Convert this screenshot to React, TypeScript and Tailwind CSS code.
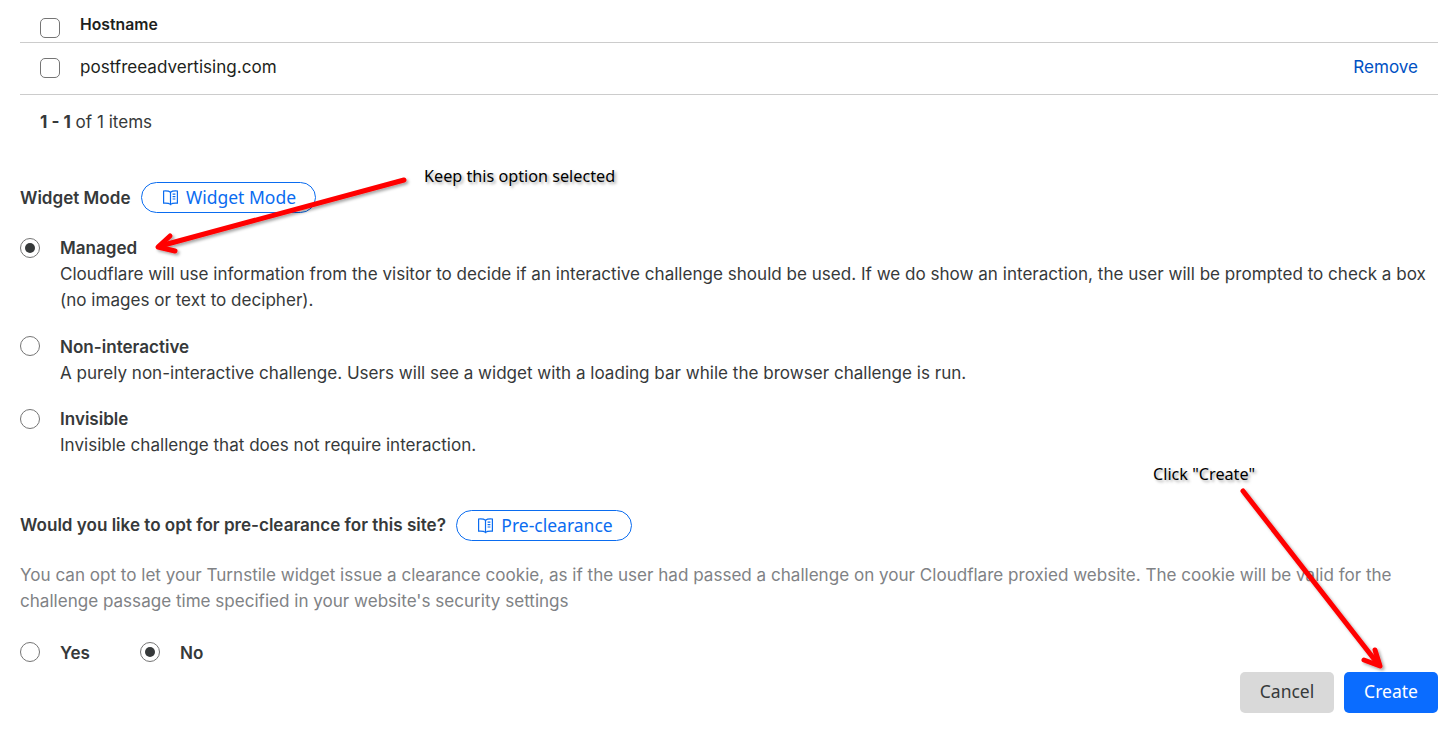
import React from "react";

const inter = "font-['Inter','Liberation_Sans',sans-serif]";
const noto = "font-['Noto_Sans','Liberation_Sans',sans-serif]";

function BookIcon() {
  return (
    <svg width="17" height="17" viewBox="0 0 17 17" fill="none" stroke="#0a6cf0" strokeWidth="1.2" className="shrink-0">
      <path d="M8.5 3.2 C7 2 4 1.8 1.6 2 V14.2 C4 14 7 14.2 8.5 15.4 V3.2 Z" />
      <path d="M8.5 3.2 C10 2 13 1.8 15.4 2 V14.2 C13 14 10 14.2 8.5 15.4" />
      <path d="M10.6 5.2 H13.4 M10.6 7.6 H13.4 M10.6 10 H13.4" />
    </svg>
  );
}

function Pill({ label, className }: { label: string; className: string }) {
  return (
    <span className={`flex items-center justify-center gap-[7px] h-[31px] rounded-full border border-[#0a6cf0] text-[#0a6cf0] text-[17.5px] ${noto} ${className}`}>
      <BookIcon />
      {label}
    </span>
  );
}

function Radio({ checked }: { checked?: boolean }) {
  return (
    <span className="w-5 h-5 rounded-full border border-[#757575] bg-white flex items-center justify-center shrink-0">
      {checked && <span className="w-[10px] h-[10px] rounded-full bg-[#36393a]" />}
    </span>
  );
}

function Checkbox({ className = "" }: { className?: string }) {
  return <span className={`w-5 h-5 rounded-[5px] border border-[#757575] bg-white shrink-0 ${className}`} />;
}

function Option({ title, checked, children, className = "", radioClass = "" }: { title: string; checked?: boolean; children: React.ReactNode; className?: string; radioClass?: string }) {
  return (
    <div className={`flex gap-5 ${className}`}>
      <span className={`h-[26px] flex items-center ${radioClass}`}>
        <Radio checked={checked} />
      </span>
      <div className="text-[17.07px] leading-[26px] text-[#36393a]">
        <div className="font-semibold">{title}</div>
        <div>{children}</div>
      </div>
    </div>
  );
}

export default function App() {
  return (
    <div className={`relative w-[1453px] h-[738px] overflow-hidden bg-white ${inter} text-[#1d1f20]`}>
      <div className="pl-5 pr-[15px]">
        <div className="h-[43px] border-b border-[#cccccc] pl-5 flex items-start pt-[18px] gap-5">
          <Checkbox />
          <span className="text-[15.75px] font-semibold leading-[14px]">Hostname</span>
        </div>
        <div className="h-[52px] border-b border-[#cccccc] pl-5 pr-5 flex items-center gap-5 pb-[2px]">
          <Checkbox />
          <span className="text-[17.07px] flex-1 mb-[2px]">postfreeadvertising.com</span>
          <span className="text-[17.07px] text-[#0051c3] mb-[2px]">Remove</span>
        </div>
        <div className="pl-5 pt-[14px] text-[17.07px] leading-[26px] text-[#36393a]">
          <span className="font-bold">1 - 1</span> of 1 items
        </div>

        <div className="flex items-center gap-[11px] mt-[47px]">
          <span className="text-[17.07px] font-semibold text-[#36393a] mt-[1px]">Widget Mode</span>
          <Pill label="Widget Mode" className="w-[175px]" />
        </div>

        <Option title="Managed" checked className="mt-[22px]">
          Cloudflare will use information from the visitor to decide if an interactive challenge should be used. If we do show an interaction, the user will be prompted to check a box (no images or text to decipher).
        </Option>
        <Option title="Non-interactive" className="mt-[21px]" radioClass="-mt-[1px]">
          A purely non-interactive challenge. Users will see a widget with a loading bar while the browser challenge is run.
        </Option>
        <Option title="Invisible" className="mt-[20px]">
          Invisible challenge that does not require interaction.
        </Option>

        <div className="flex items-center gap-[10px] mt-[52px]">
          <span className="text-[17.07px] font-semibold text-[#36393a] mb-[2px]">Would you like to opt for pre-clearance for this site?</span>
          <Pill label="Pre-clearance" className="w-[176px] pl-[2px]" />
        </div>

        <p className="mt-[21px] text-[17.07px] leading-[26px] text-[#808285]">
          You can opt to let your Turnstile widget issue a clearance cookie, as if the user had passed a challenge on your Cloudflare proxied website. The cookie will be valid for the challenge passage time specified in your website's security settings
        </p>

        <div className="flex items-center h-5 mt-[28px] text-[17.07px] font-semibold text-[#36393a]">
          <Radio />
          <span className="ml-5 w-[80px] leading-5 mt-[2px] shrink-0">Yes</span>
          <Radio checked />
          <span className="ml-5 leading-5 mt-[2px]">No</span>
        </div>

        <div className={`flex justify-end gap-[10px] mt-[10px] text-[17.5px] ${noto}`}>
          <span className="w-[94px] h-[41px] rounded-[5px] bg-[#d9d9d9] text-[#36393a] flex items-center justify-center pb-[2px]">Cancel</span>
          <span className="w-[94px] h-[41px] rounded-[5px] bg-[#0a6cff] text-white flex items-center justify-center pb-[2px]">Create</span>
        </div>
      </div>

      <span className={`absolute left-[424px] top-[166px] text-[16.2px] leading-[20px] text-black ${noto} [text-shadow:2px_2px_3px_rgba(0,0,0,0.35)]`}>Keep this option selected</span>
      <span className={`absolute left-[1153px] top-[464px] text-[16.2px] leading-[20px] text-black ${noto} [text-shadow:2px_2px_3px_rgba(0,0,0,0.35)]`}>Click "Create"</span>

      <svg className="absolute inset-0 pointer-events-none" width="1453" height="738" viewBox="0 0 1453 738" fill="none">
        <defs>
          <filter id="sh" x="-10%" y="-10%" width="120%" height="120%">
            <feDropShadow dx="2" dy="2" stdDeviation="1.5" floodColor="#000" floodOpacity="0.35" />
          </filter>
        </defs>
        <g stroke="#ff0000" strokeLinecap="round" strokeLinejoin="round" filter="url(#sh)">
          <path d="M404 180 L160 246" strokeWidth="5" />
          <path d="M170 236 L158 247 L175 251" strokeWidth="5" />
          <path d="M1243 491 L1378 664" strokeWidth="5" />
          <path d="M1375 650 L1380 666 L1364 660" strokeWidth="5" />
        </g>
      </svg>
    </div>
  );
}
